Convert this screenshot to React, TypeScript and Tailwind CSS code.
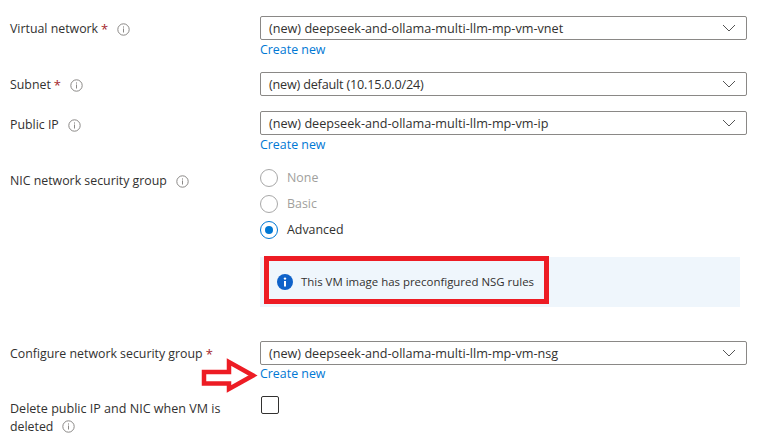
import React from "react";

function Info({ className = "" }: { className?: string }) {
  return (
    <svg width="13" height="13" viewBox="0 0 13 13" className={"shrink-0 " + className}>
      <circle cx="6.5" cy="6.5" r="5.7" fill="none" stroke="#8a8886" strokeWidth="1" />
      <rect x="6" y="5.5" width="1" height="4" fill="#8a8886" />
      <rect x="6" y="3.4" width="1" height="1.2" fill="#8a8886" />
    </svg>
  );
}

function Star() {
  return <span className="text-[#a4262c] text-[13px] ml-[3px]">*</span>;
}

function Chevron() {
  return (
    <svg width="14" height="8" viewBox="0 0 14 8" className="shrink-0">
      <path d="M1 1 L7 7 L13 1" fill="none" stroke="#555" strokeWidth="1" />
    </svg>
  );
}

function Select({ value, className = "" }: { value: string; className?: string }) {
  return (
    <div className="h-6 w-[487px] border border-[#8a8886] rounded-[2px] flex items-center justify-between pl-[8px] pr-[10px] text-[12.65px] text-[#323130]">
      <span className={className}>{value}</span>
      <Chevron />
    </div>
  );
}

function CreateNew({ className = "mt-[1px]" }: { className?: string }) {
  return <div className={"text-[#0078d4] text-[12.4px] h-[18px] leading-[18px] " + className}>Create new</div>;
}

function Radio({ label, checked }: { label: string; checked?: boolean }) {
  return (
    <div className={"flex items-center gap-[9px] h-[18px] text-[12.4px] " + (checked ? "text-[#323130]" : "text-[#a19f9d]")}>
      <span
        className={
          "w-[18px] h-[18px] rounded-full border flex items-center justify-center " +
          (checked ? "border-[#0078d4]" : "border-[#a8a8a8]")
        }
      >
        {checked && <span className="w-[8px] h-[8px] rounded-full bg-[#0078d4]" />}
      </span>
      {label}
    </div>
  );
}

export default function App() {
  return (
    <div
      className="relative w-[774px] h-[441px] overflow-hidden bg-white text-[12.35px] leading-[18px] text-[#323130] pt-4 pl-[10px]"
      style={{ fontFamily: '"Open Sans", "Noto Sans", sans-serif' }}
    >
      <div className="grid grid-cols-[250px_487px] items-start">
        <div className="flex items-center h-6 mt-[1px]">
          Virtual network<Star /><Info className="ml-[9px]" />
        </div>
        <div>
          <Select value="(new) deepseek-and-ollama-multi-llm-mp-vm-vnet" />
          <CreateNew />
        </div>

        <div className="flex items-center h-6 mt-[14px]">
          Subnet<Star /><Info className="ml-[9px]" />
        </div>
        <div className="mt-[13px]">
          <Select value="(new) default (10.15.0.0/24)" className="tracking-[-0.2px]" />
        </div>

        <div className="flex items-center h-6 mt-[16px]">
          Public IP<Info className="ml-[9px]" />
        </div>
        <div className="mt-[14px]">
          <Select value="(new) deepseek-and-ollama-multi-llm-mp-vm-ip" />
          <CreateNew />
        </div>

        <div className="flex items-center h-[18px] mt-[18px]">
          NIC network security group<Info className="ml-[9px]" />
        </div>
        <div className="mt-[15px] flex flex-col gap-2">
          <Radio label="None" />
          <Radio label="Basic" />
          <Radio label="Advanced" checked />
          <div className="relative mt-[10px] w-[480px] h-[50px] bg-[#eff6fc] flex items-center pl-[17px] gap-[8px] text-[11.45px]">
            <svg width="16" height="16" viewBox="0 0 16 16" className="shrink-0">
              <circle cx="8" cy="8" r="8" fill="#0f62c9" />
              <rect x="7" y="7" width="2" height="5.5" fill="#fff" />
              <circle cx="8" cy="4.6" r="1.2" fill="#fff" />
            </svg>
            <span>This VM image has preconfigured NSG rules</span>
            <div className="absolute left-[4px] -top-[1px] w-[285px] h-[48px] border-[5px] border-[#ed1c24]" />
          </div>
        </div>

        <div className="flex items-center h-6 mt-[35px]">
          Configure network security group<Star />
        </div>
        <div className="mt-[34px]">
          <Select value="(new) deepseek-and-ollama-multi-llm-mp-vm-nsg" />
          <CreateNew className="mt-0" />
        </div>

        <div className="mt-[17px] leading-[18px] w-[225px] text-[12.55px]">
          Delete public IP and NIC when VM is
          <div className="flex items-center h-[17px] text-[12.35px]">
            deleted<Info className="ml-[9px]" />
          </div>
        </div>
        <div className="mt-[13px]">
          <div className="ml-[1px] w-[18px] h-[18px] border border-[#323130] rounded-[2px]" />
        </div>
      </div>

      <svg width="60" height="38" viewBox="0 0 60 38" className="absolute left-[200px] top-[357px]">
        <path
          d="M4 15 H29 V5 L53 18.5 L29 32 V26.5 H4 Z"
          fill="#fff"
          stroke="#ed1c24"
          strokeWidth="4.5"
        />
      </svg>
    </div>
  );
}
